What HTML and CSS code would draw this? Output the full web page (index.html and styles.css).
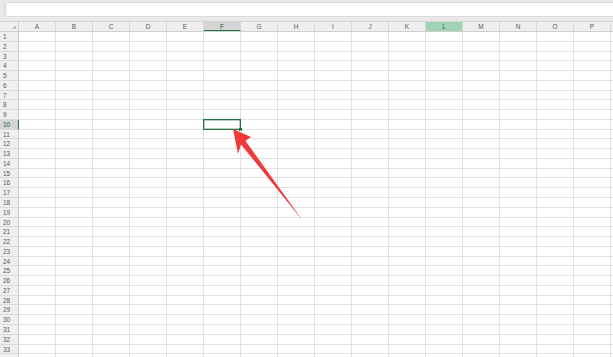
FILE: index.html
```html
<!DOCTYPE html>
<html>
<head>
<meta charset="utf-8">
<link rel="stylesheet" href="styles.css">
</head>
<body>
<div class="app">
  <div class="formula-bar">
    <div class="fx-sep"></div>
    <div class="fx-input"></div>
  </div>
  <div class="sheet">
    <div class="row head">
      <div class="corner"><svg width="19" height="9" viewBox="0 0 19 9"><polygon points="16,3 16,7 12,7" fill="#bdbdbd"/></svg></div>
      <div class="ch">A</div><div class="ch">B</div><div class="ch">C</div><div class="ch">D</div>
      <div class="ch">E</div><div class="ch ch-sel">F</div><div class="ch">G</div><div class="ch">H</div>
      <div class="ch">I</div><div class="ch">J</div><div class="ch">K</div><div class="ch ch-hover">L</div>
      <div class="ch">M</div><div class="ch">N</div><div class="ch">O</div><div class="ch">P</div><div class="ch"></div>
    </div>
    <div class="row"><div class="rh">1</div><div class="cells"></div></div>
    <div class="row"><div class="rh">2</div><div class="cells"></div></div>
    <div class="row"><div class="rh">3</div><div class="cells"></div></div>
    <div class="row"><div class="rh">4</div><div class="cells"></div></div>
    <div class="row"><div class="rh">5</div><div class="cells"></div></div>
    <div class="row"><div class="rh">6</div><div class="cells"></div></div>
    <div class="row"><div class="rh">7</div><div class="cells"></div></div>
    <div class="row"><div class="rh">8</div><div class="cells"></div></div>
    <div class="row"><div class="rh">9</div><div class="cells"></div></div>
    <div class="row"><div class="rh rh-sel">10</div><div class="cells"><div class="sel"><span class="handle"></span></div></div></div>
    <div class="row"><div class="rh">11</div><div class="cells"></div></div>
    <div class="row"><div class="rh">12</div><div class="cells"></div></div>
    <div class="row"><div class="rh">13</div><div class="cells"></div></div>
    <div class="row"><div class="rh">14</div><div class="cells"></div></div>
    <div class="row"><div class="rh">15</div><div class="cells"></div></div>
    <div class="row"><div class="rh">16</div><div class="cells"></div></div>
    <div class="row"><div class="rh">17</div><div class="cells"></div></div>
    <div class="row"><div class="rh">18</div><div class="cells"></div></div>
    <div class="row"><div class="rh">19</div><div class="cells"></div></div>
    <div class="row"><div class="rh">20</div><div class="cells"></div></div>
    <div class="row"><div class="rh">21</div><div class="cells"></div></div>
    <div class="row"><div class="rh">22</div><div class="cells"></div></div>
    <div class="row"><div class="rh">23</div><div class="cells"></div></div>
    <div class="row"><div class="rh">24</div><div class="cells"></div></div>
    <div class="row"><div class="rh">25</div><div class="cells"></div></div>
    <div class="row"><div class="rh">26</div><div class="cells"></div></div>
    <div class="row"><div class="rh">27</div><div class="cells"></div></div>
    <div class="row"><div class="rh">28</div><div class="cells"></div></div>
    <div class="row"><div class="rh">29</div><div class="cells"></div></div>
    <div class="row"><div class="rh">30</div><div class="cells"></div></div>
    <div class="row"><div class="rh">31</div><div class="cells"></div></div>
    <div class="row"><div class="rh">32</div><div class="cells"></div></div>
    <div class="row"><div class="rh">33</div><div class="cells"></div></div>
    <div class="row"><div class="rh"></div><div class="cells"></div></div>
  </div>
  <svg class="arrow" width="613" height="357" viewBox="0 0 613 357">
    <polygon points="233,129 251,137 245.5,141 303,221 241,144.5 238,154" fill="#f03a3a"/>
  </svg>
</div>
</body>
</html>
```

FILE: styles.css
```css
html, body {
  margin: 0;
  padding: 0;
  background: #ffffff;
}

.app {
  position: relative;
  width: 613px;
  height: 357px;
  overflow: hidden;
  font-family: "Liberation Sans", Arial, sans-serif;
}

.formula-bar {
  height: 21px;
  background: #e9e9e9;
  display: flex;
  align-items: flex-start;
  padding-top: 2px;
  box-sizing: border-box;
}

.fx-sep {
  width: 1px;
  height: 13px;
  margin-left: 4px;
  margin-right: 2px;
  background: #d7d7d7;
}

.fx-input {
  flex: 1;
  height: 13px;
  background: #ffffff;
  border-top: 1px solid #dcdcdc;
  border-bottom: 1px solid #dcdcdc;
}

.sheet {
  display: flex;
  flex-direction: column;
  border-top: 1px solid #d4d4d4;
}

.row {
  display: flex;
  height: 9.78px;
  flex: none;
}

.row.head {
  height: 9px;
  background: #efefef;
  border-bottom: 1px solid #cfcfcf;
}

.corner {
  width: 19px;
  flex: none;
  box-sizing: border-box;
  border-right: 1px solid #cfcfcf;
}

.corner svg {
  display: block;
}

.ch {
  width: 37px;
  flex: none;
  box-sizing: border-box;
  border-right: 1px solid #d6d6d6;
  font-size: 6.5px;
  line-height: 9px;
  color: #5a5a5a;
  text-align: center;
}

.ch-sel {
  background: #d5d5d5;
  border-bottom: 1px solid #217346;
  color: #1e5f3c;
}

.ch-hover {
  background: #9fd4b7;
  color: #2f5f45;
}

.rh {
  width: 19px;
  flex: none;
  box-sizing: border-box;
  background: #efefef;
  border-right: 1px solid #cfcfcf;
  border-bottom: 1px solid #dadada;
  font-size: 6.5px;
  line-height: 9px;
  color: #5a5a5a;
  padding-left: 3px;
}

.rh-sel {
  background: #d5d5d5;
  border-right: 1px solid #217346;
  color: #1e5f3c;
}

.cells {
  position: relative;
  flex: 1;
  border-bottom: 1px solid #e1e1e1;
  background-image: linear-gradient(to right, transparent 36px, #e1e1e1 36px);
  background-size: 37px 100%;
}

.sel {
  position: absolute;
  left: 184px;
  top: -1px;
  width: 38px;
  height: 10.78px;
  box-sizing: border-box;
  border: 1px solid #217346;
  box-shadow: inset 0 0 0 0.5px #6f9f84;
}

.handle {
  position: absolute;
  right: -2px;
  bottom: -2px;
  width: 3px;
  height: 3px;
  background: #217346;
}

.arrow {
  position: absolute;
  left: 0;
  top: 0;
  pointer-events: none;
}
```
